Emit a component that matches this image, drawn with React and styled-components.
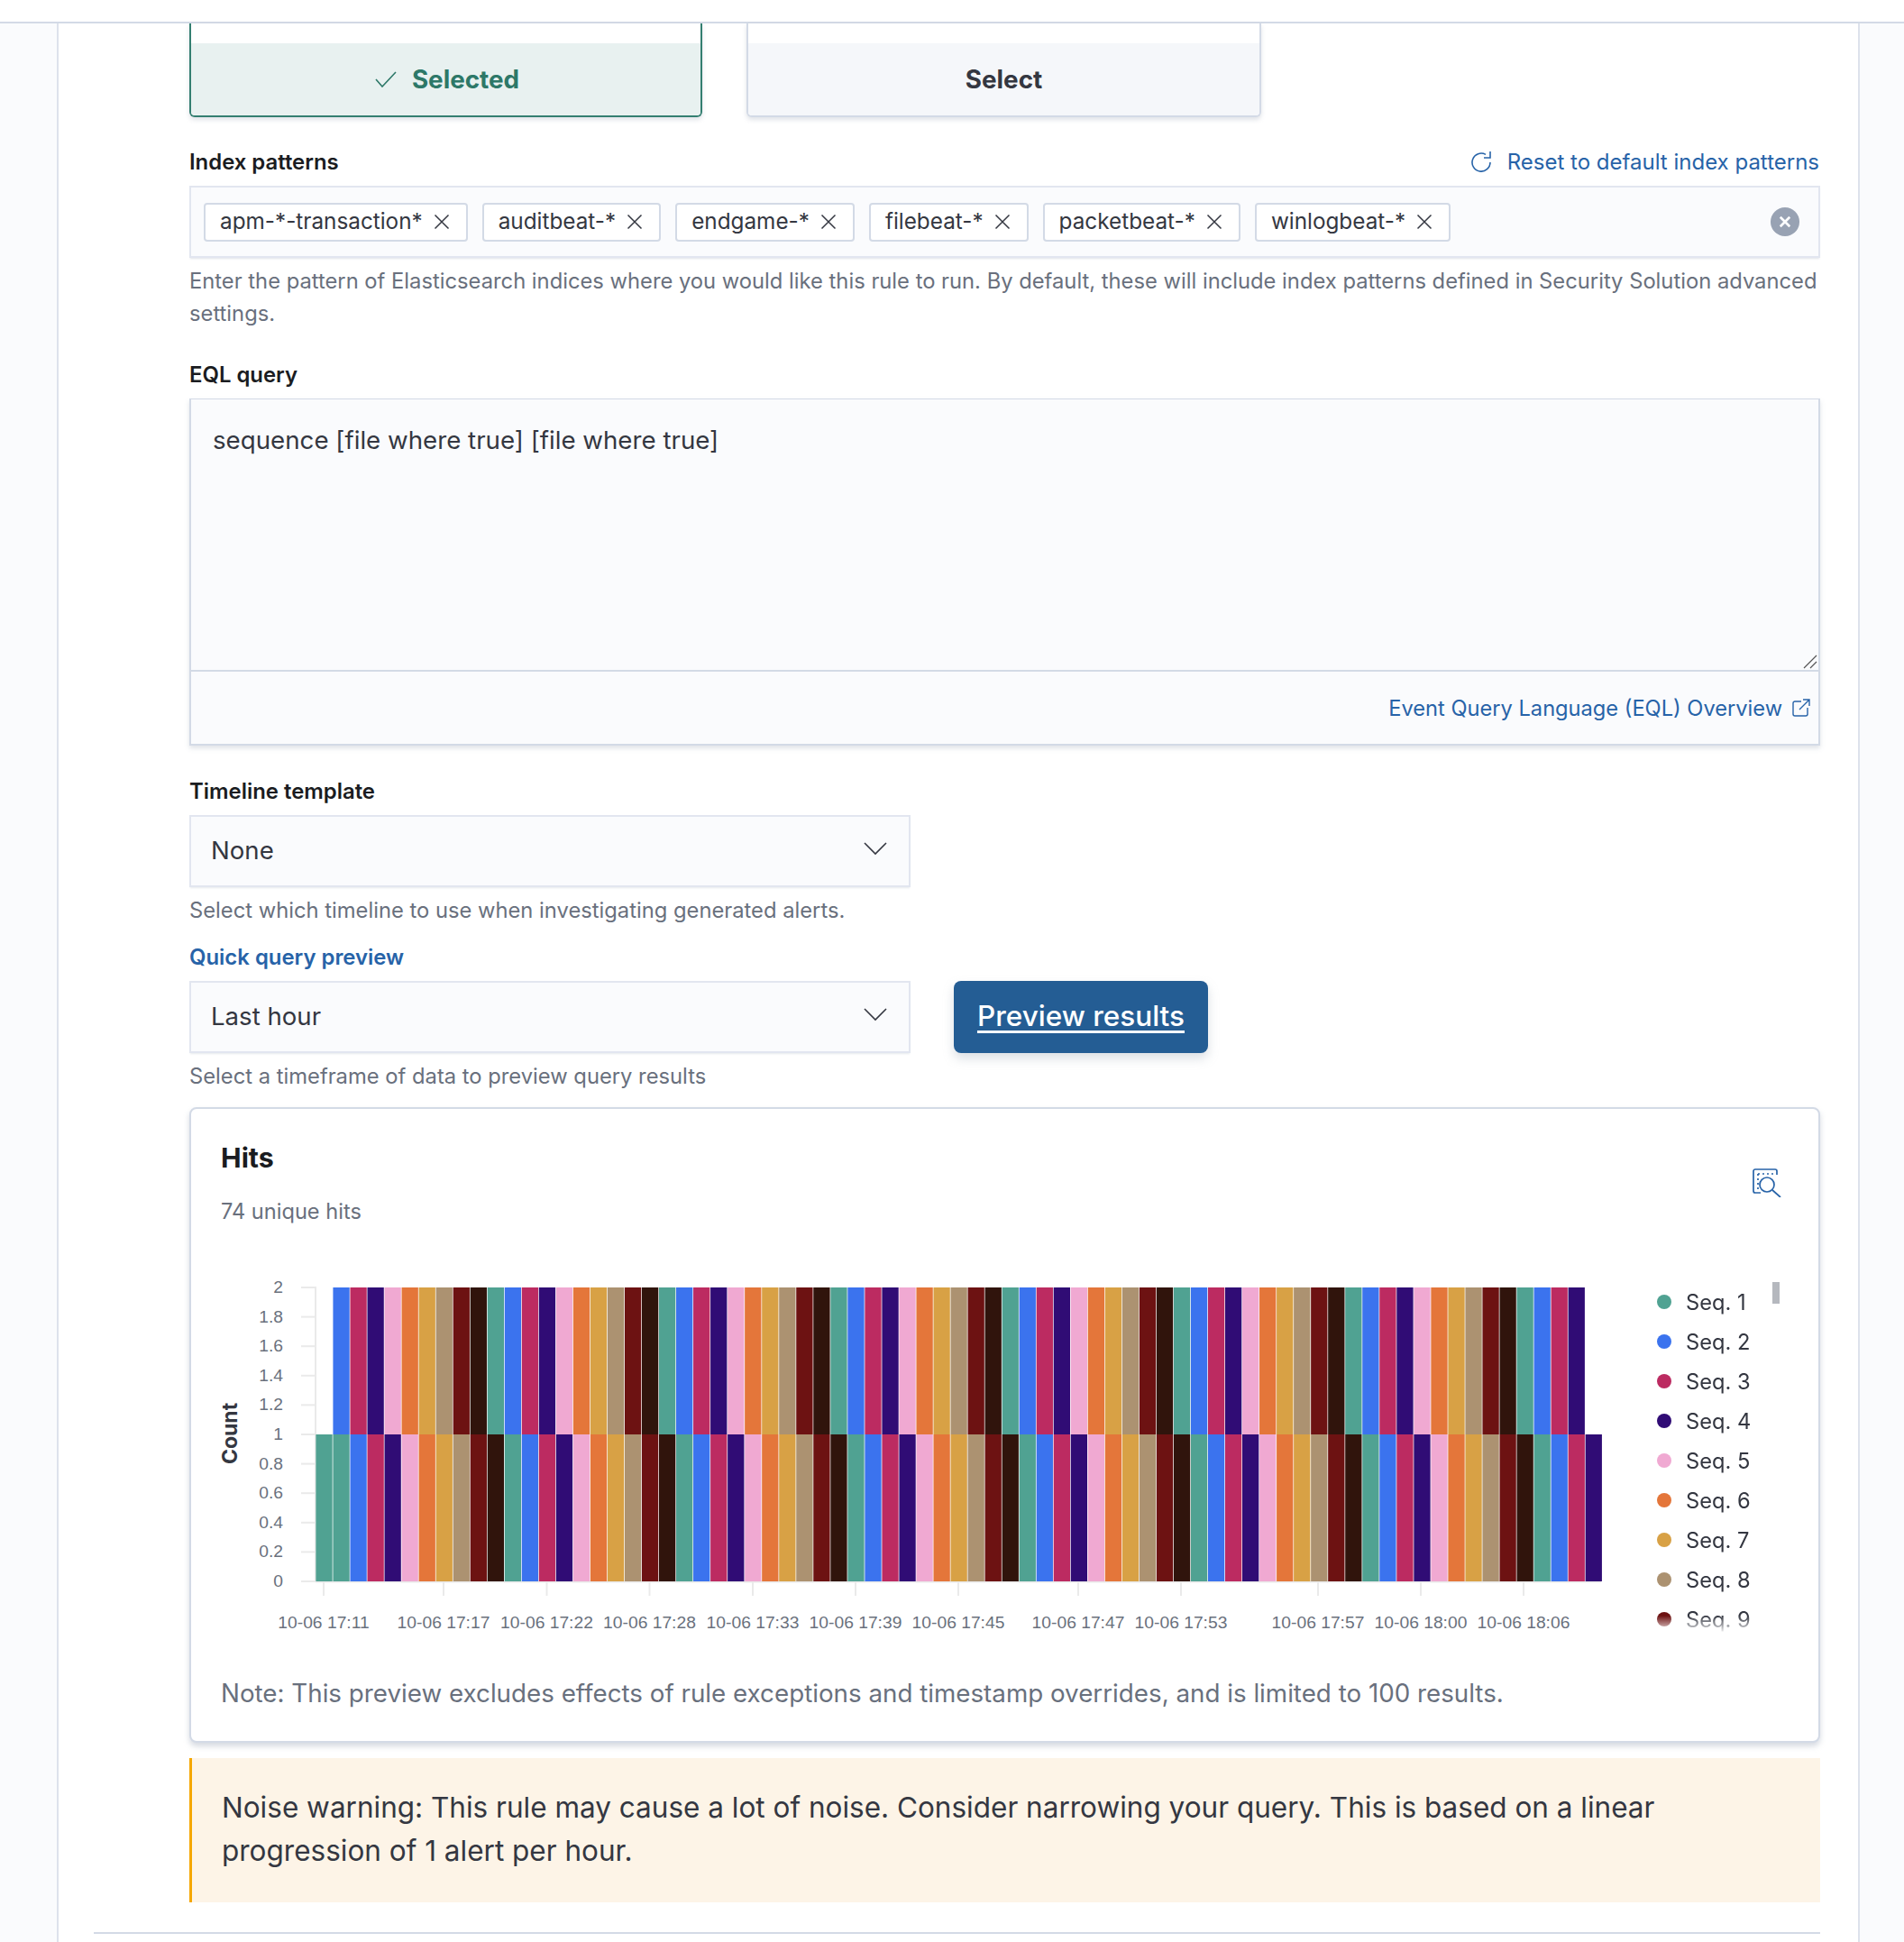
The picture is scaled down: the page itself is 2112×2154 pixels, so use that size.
import React from "react";
import styled, { createGlobalStyle } from "styled-components";

const Global = createGlobalStyle`
  html, body { margin: 0; padding: 0; }
  body {
    width: 2112px; height: 2154px; overflow: hidden; background: #fafbfd;
    font-family: Inter, "Noto Sans", "Liberation Sans", sans-serif; color: #343741;
    -webkit-font-smoothing: antialiased;
  }
  * { box-sizing: border-box; }
`;

const TopBar = styled.div`height: 26px; background: #fff; border-bottom: 2px solid #d3dae6;`;
const Panel = styled.main`
  margin: 0 49px 0 63px; width: 2000px; height: 2128px; background: #fff;
  border-left: 2px solid #dde2ec; border-right: 2px solid #dde2ec; padding: 0 42px 0 39px;
`;
const Form = styled.div`margin-left: 106px;`;

const CardRow = styled.div`display: flex; gap: 49px;`;
const TypeCard = styled.div`
  width: ${p => p.$w}px; height: 104px; padding-top: 22px; background: #fff;
  border: 2px solid ${p => (p.$on ? "#347f71" : "#d3dae6")}; border-top: 0; border-radius: 0 0 6px 6px;
  box-shadow: 0 3px 5px rgba(152,162,179,.3); overflow: hidden;
`;
const TypeFoot = styled.div`
  height: 80px; display: flex; align-items: center; justify-content: center; gap: 17px;
  padding-left: ${p => (p.$on ? 3 : 0)}px;
  background: ${p => (p.$on ? "#e8f1f0" : "#f5f7fa")};
  color: ${p => (p.$on ? "#2d7868" : "#343741")};
  font-size: 27.8px; font-weight: 700;
`;

const Field = styled.section`margin-top: ${p => p.$top}px;`;
const LabelRow = styled.div`display: flex; justify-content: space-between; align-items: center; height: 26px; padding-bottom: 2px; margin-bottom: 13px;`;
const Label = styled.label`font-size: 23.9px; font-weight: 600; color: ${p => p.$blue ? "#2763a8" : "#1a1c21"};`;
const Link = styled.a`
  display: inline-flex; align-items: center; gap: ${p => p.$gap || 10}px; color: #2763a8;
  font-size: ${p => p.$size || 22}px; margin-right: ${p => p.$end || 0}px;
`;
const Help = styled.p`margin: 8px 0 0; font-size: 23.75px; line-height: 36px; color: #69707d;`;

const Combo = styled.div`
  height: 80px; display: flex; align-items: center; gap: 16px; padding: 0 14px;
  background: #fafbfd; border: 2px solid #e2e6f0; box-shadow: 0 2px 2px -1px rgba(152,162,179,.3);
`;
const Chip = styled.span`
  height: 43px; display: inline-flex; align-items: center; gap: 11px; padding: 0 17px 2px 16px;
  background: #fff; border: 2px solid #d3dae6; border-radius: 4px; font-size: 24.3px; color: #343741;
  svg { margin-top: 2px; }
`;
const ClearDot = styled.span`
  margin-left: auto; margin-right: 7px; width: 32px; height: 32px; border-radius: 50%; background: #98a2b3;
  display: flex; align-items: center; justify-content: center;
`;

const Editor = styled.div`
  background: #fafbfd; border: 2px solid #d3dae6; border-top-width: 1px;
  box-shadow: 0 3px 5px rgba(152,162,179,.3);
`;
const CodeArea = styled.div`
  position: relative; height: 302px; padding: 23px 24px; font-size: 27.7px; line-height: 44px; color: #343741;
  border-bottom: 2px solid #d3dae6;
`;
const Handle = styled.svg`position: absolute; right: 1px; bottom: 1px;`;
const EditorFoot = styled.div`height: 80px; display: flex; align-items: center; justify-content: flex-end; padding-right: 9px;`;

const Select = styled.div`
  width: 800px; height: 80px; display: flex; align-items: center; justify-content: space-between;
  padding: 0 24px 2px 22px; background: #fafbfd; border: 2px solid #e2e6f0; font-size: 27.6px; color: #343741;
  box-shadow: 0 2px 2px -1px rgba(152,162,179,.25);
  svg { margin-top: -4px; }
`;
const SelectRow = styled.div`display: flex; gap: 48px; align-items: flex-start;`;
const Primary = styled.button`
  width: 282px; height: 80px; border: 0; border-radius: 8px; background: #245d94; color: #fff;
  font: 500 31.5px Inter, sans-serif; text-decoration: underline; text-underline-offset: 5px; padding: 0 0 3px;
  box-shadow: 0 6px 12px rgba(152,162,179,.35);
`;

const Hits = styled.section`
  margin-top: 16px; height: 705px; padding: 35px 41px 0 33px; background: #fff;
  border: 2px solid #d3dae6; border-radius: 8px; box-shadow: 0 4px 6px rgba(152,162,179,.4);
`;
const HitsHead = styled.header`display: flex; justify-content: space-between; align-items: flex-start; height: 97px;`;
const Title = styled.h3`margin: 0; font-size: 30.3px; line-height: 38px; font-weight: 700; color: #1a1c21;`;
const Sub = styled.p`margin: 23px 0 0; font-size: 23.6px; line-height: 36px; color: #69707d;`;
const InspectIcon = styled.svg`margin-top: 31px;`;
const ChartRow = styled.div`display: flex; margin-top: 48px; height: 410px;`;
const Legend = styled.ul`
  position: relative; list-style: none; margin: 12px 0 0; padding: 0; width: 136px; height: 392px; overflow: hidden;
  -webkit-mask-image: linear-gradient(to bottom, #000 370px, transparent 390px);
  mask-image: linear-gradient(to bottom, #000 370px, transparent 390px);
`;
const LegendItem = styled.li`height: 44px; display: flex; align-items: center; gap: 16px; font-size: 23.7px; color: #343741;`;
const Dot = styled.i`width: 16px; height: 16px; border-radius: 50%; background: ${p => p.$c};`;
const Scroll = styled.div`width: 8px; height: 24px; background: #b5b8be; position: absolute; top: 0; right: 0;`;
const Note = styled.p`margin: 40px 0 0; font-size: 27.75px; line-height: 36px; color: #69707d;`;

const Callout = styled.aside`
  margin-top: 17px; height: 160px; padding: 31px 32px 0 33px; background: #fdf4e7; border-left: 3px solid #f5a700;
  font-size: 31.5px; line-height: 48px; color: #343741;
`;
const Rule = styled.hr`margin: 33px 0 0; border: 0; height: 2px; background: #d3dae6;`;

const palette = ["#50a292", "#3b73ee", "#bc2b61", "#300c75", "#f0a9d2", "#e4763a", "#d8a145", "#ac9271", "#6d1212", "#30140c"];
const X0 = 350, P = 19.03, W = 18.3;
const ticks = [["2",1428],["1.8",1460.6],["1.6",1493.2],["1.4",1525.8],["1.2",1558.4],["1",1591],["0.8",1623.6],["0.6",1656.2],["0.4",1688.8],["0.2",1721.4],["0",1754]];
const xTicks = [[359,"17:11"],[492,"17:17"],[606.5,"17:22"],[720.5,"17:28"],[835,"17:33"],[949,"17:39"],[1063,"17:45"],[1196,"17:47"],[1310,"17:53"],[1462,"17:57"],[1576,"18:00"],[1690,"18:06"]];

function Chart() {
  const lower = Array.from({ length: 75 }, (_, i) => i);
  const upper = Array.from({ length: 73 }, (_, i) => i + 1);
  return (
    <svg width="1593" height="410" viewBox="245 1410 1593 410" style={{ display: "block", flex: "none" }}>
      {ticks.map(([t, y]) => (
        <g key={t}>
          <line x1="334" x2="350" y1={y} y2={y} stroke="#eaeaea" strokeWidth="2" />
          <text x="314" y={y + 6} textAnchor="end" fontFamily="Liberation Sans" fontSize="19.25" fill="#6a717d">{t}</text>
        </g>
      ))}
      <line x1="350" x2="350" y1="1427" y2="1755" stroke="#eaeaea" strokeWidth="2" />
      <line x1="350" x2="1776" y1="1754.5" y2="1754.5" stroke="#eaeaea" strokeWidth="2" />
      {lower.map(i => <rect key={i} x={X0 + i * P + 0.4} y="1591" width={W} height="163" fill={palette[i === 0 ? 0 : (i - 1) % 10]} />)}
      {upper.map(i => <rect key={i} x={X0 + i * P + 0.4} y="1428" width={W} height="163" fill={palette[i % 10]} />)}
      {xTicks.map(([x, t]) => (
        <g key={t}>
          <line x1={x} x2={x} y1="1755" y2="1770" stroke="#eaeaea" strokeWidth="2" />
          <text x={x} y="1806" textAnchor="middle" fontFamily="Liberation Sans" fontSize="19.25" fill="#6a717d">10-06 {t}</text>
        </g>
      ))}
      <text transform="translate(263 1590) rotate(-90)" textAnchor="middle" fontFamily="Inter" fontWeight="700" fontSize="23" fill="#343741">Count</text>
    </svg>
  );
}

const Cross = ({ s = 16, c = "#343741", w = 1.5 }) => (
  <svg width={s} height={s} viewBox="0 0 16 16"><path d="M2 2 14 14M14 2 2 14" stroke={c} strokeWidth={w} fill="none" /></svg>
);
const Chevron = () => (
  <svg width="26" height="16" viewBox="0 0 26 16"><path d="M1 2 13 14 25 2" stroke="#343741" strokeWidth="1.6" fill="none" /></svg>
);

const chips = ["apm-*-transaction*", "auditbeat-*", "endgame-*", "filebeat-*", "packetbeat-*", "winlogbeat-*"];
const seqs = ["Seq. 1","Seq. 2","Seq. 3","Seq. 4","Seq. 5","Seq. 6","Seq. 7","Seq. 8","Seq. 9"];

export default function App() {
  return (
    <>
      <Global />
      <TopBar />
      <Panel>
        <Form>
          <CardRow>
            <TypeCard $on $w={569}>
              <TypeFoot $on>
                <svg width="24" height="18" viewBox="0 0 24 18"><path d="M1 9 8 17 23 1" stroke="#2d7868" strokeWidth="1.6" fill="none" /></svg>
                Selected
              </TypeFoot>
            </TypeCard>
            <TypeCard $w={571}><TypeFoot>Select</TypeFoot></TypeCard>
          </CardRow>

          <Field $top={37}>
            <LabelRow>
              <Label>Index patterns</Label>
              <Link $size={24} $gap={18} $end={1}>
                <svg width="22" height="23" viewBox="0 0 22 23"><path d="M16 3.4A10 10 0 1 0 21 12M21 0v7h-7" stroke="#2763a8" strokeWidth="1.6" fill="none" /></svg>
                Reset to default index patterns
              </Link>
            </LabelRow>
            <Combo>
              {chips.map(c => <Chip key={c}>{c}<Cross s={20} w={1.2} /></Chip>)}
              <ClearDot><Cross s={14} c="#fff" w={3} /></ClearDot>
            </Combo>
            <Help>Enter the pattern of Elasticsearch indices where you would like this rule to run. By default, these will include index patterns defined in Security Solution advanced settings.</Help>
          </Field>

          <Field $top={37}>
            <LabelRow><Label>EQL query</Label></LabelRow>
            <Editor>
              <CodeArea>
                sequence [file where true] [file where true]
                <Handle width="16" height="16" viewBox="0 0 16 16"><path d="M1 15 15 1M8 15 15 8" stroke="#555" strokeWidth="1.2" fill="none" /></Handle>
              </CodeArea>
              <EditorFoot>
                <Link $size={23.65} $gap={11}>
                  Event Query Language (EQL) Overview
                  <svg width="20" height="20" viewBox="0 0 20 20"><path d="M10 3H3a2 2 0 0 0-2 2v12a2 2 0 0 0 2 2h12a2 2 0 0 0 2-2v-7M8 12 19 1M12 1h7v7" stroke="#2763a8" strokeWidth="1.4" fill="none" /></svg>
                </Link>
              </EditorFoot>
            </Editor>
          </Field>

          <Field $top={38}>
            <LabelRow><Label>Timeline template</Label></LabelRow>
            <Select>None<Chevron /></Select>
            <Help>Select which timeline to use when investigating generated alerts.</Help>
          </Field>

          <Field $top={21}>
            <LabelRow><Label $blue>Quick query preview</Label></LabelRow>
            <SelectRow>
              <Select>Last hour<Chevron /></Select>
              <Primary>Preview results</Primary>
            </SelectRow>
            <Help>Select a timeframe of data to preview query results</Help>
          </Field>

          <Hits>
            <HitsHead>
              <div>
                <Title>Hits</Title>
                <Sub>74 unique hits</Sub>
              </div>
              <InspectIcon width="32" height="32" viewBox="0 0 32 32" fill="none" stroke="#2763a8" strokeWidth="1.7">
                <path d="M9 27H3a2 2 0 0 1-2-2V3a2 2 0 0 1 2-2h22a2 2 0 0 1 2 2v4" />
                <path d="M6 6h20M6 6v17" strokeDasharray="2 3" />
                <circle cx="16" cy="18" r="8" />
                <path d="M22 24 31 32" />
              </InspectIcon>
            </HitsHead>
            <ChartRow>
              <Chart />
              <Legend>
                {seqs.map((s, i) => <LegendItem key={s}><Dot $c={palette[i]} />{s}</LegendItem>)}
                <Scroll />
              </Legend>
            </ChartRow>
            <Note>Note: This preview excludes effects of rule exceptions and timestamp overrides, and is limited to 100 results.</Note>
          </Hits>

          <Callout>Noise warning: This rule may cause a lot of noise. Consider narrowing your query. This is based on a linear progression of 1 alert per hour.</Callout>
        </Form>
        <Rule />
      </Panel>
    </>
  );
}
